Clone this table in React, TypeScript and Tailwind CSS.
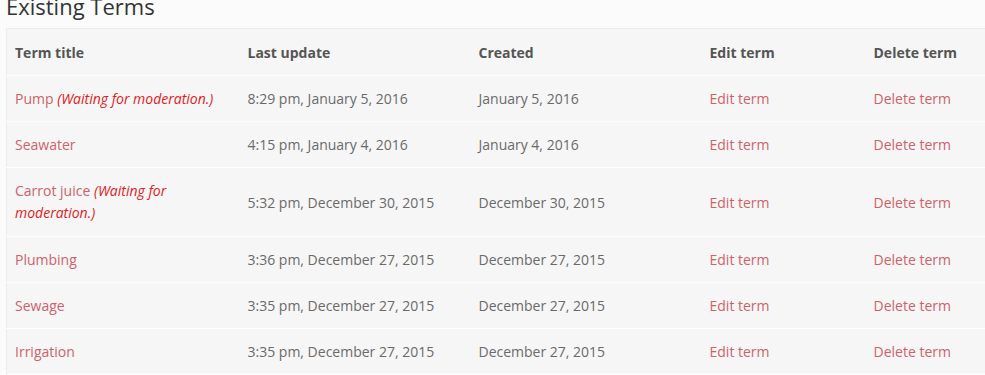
const rows = [
  { title: 'Pump', pending: true, updated: '8:29 pm, January 5, 2016', created: 'January 5, 2016' },
  { title: 'Seawater', pending: false, updated: '4:15 pm, January 4, 2016', created: 'January 4, 2016' },
  { title: 'Carrot juice', pending: true, updated: '5:32 pm, December 30, 2015', created: 'December 30, 2015' },
  { title: 'Plumbing', pending: false, updated: '3:36 pm, December 27, 2015', created: 'December 27, 2015' },
  { title: 'Sewage', pending: false, updated: '3:35 pm, December 27, 2015', created: 'December 27, 2015' },
  { title: 'Irrigation', pending: false, updated: '3:35 pm, December 27, 2015', created: 'December 27, 2015' },
];

const cell = 'px-2 pt-[12px] pb-[11px]';

export default function App() {
  return (
    <div className="w-[985px] h-[375px] overflow-hidden bg-[#fbfbfb] font-['Open_Sans',sans-serif] text-[14px] leading-[22px] text-[#6a6a6a]">
      <h2 className="mt-[-12px] ml-[6px] text-[22px] leading-[36px] text-[#333] font-normal h-[40px]">Existing Terms</h2>
      <table className="ml-[6px] w-[981px] table-fixed border-collapse bg-[#f6f6f6] border border-[#ececec]">
        <colgroup>
          <col className="w-[233px]" />
          <col className="w-[231px]" />
          <col className="w-[231px]" />
          <col className="w-[164px]" />
          <col />
        </colgroup>
        <thead>
          <tr className="border-b border-[#fdfdfd]">
            <th className="text-left font-bold text-[#555] px-2 pt-[13px] pb-[11px]">Term title</th>
            <th className="text-left font-bold text-[#555] px-2 pt-[13px] pb-[11px]">Last update</th>
            <th className="text-left font-bold text-[#555] px-2 pt-[13px] pb-[11px]">Created</th>
            <th className="text-left font-bold text-[#555] px-2 pt-[13px] pb-[11px]">Edit term</th>
            <th className="text-left font-bold text-[#555] px-2 pt-[13px] pb-[11px]">Delete term</th>
          </tr>
        </thead>
        <tbody>
          {rows.map((r) => (
            <tr key={r.title} className="border-b border-[#fdfdfd]">
              <td className={r.pending && r.title === 'Carrot juice' ? 'px-2 pt-[12px] pb-[12px]' : cell}>
                <a href="#" className="text-[#cd626b]">{r.title}</a>
                {r.pending && (
                  <em className="font-medium text-[#dd1c24]"> (Waiting for moderation.)</em>
                )}
              </td>
              <td className={cell}>{r.updated}</td>
              <td className={cell}>{r.created}</td>
              <td className={cell}><a href="#" className="text-[#cd626b]">Edit term</a></td>
              <td className={cell}><a href="#" className="text-[#cd626b]">Delete term</a></td>
            </tr>
          ))}
        </tbody>
      </table>
    </div>
  );
}
